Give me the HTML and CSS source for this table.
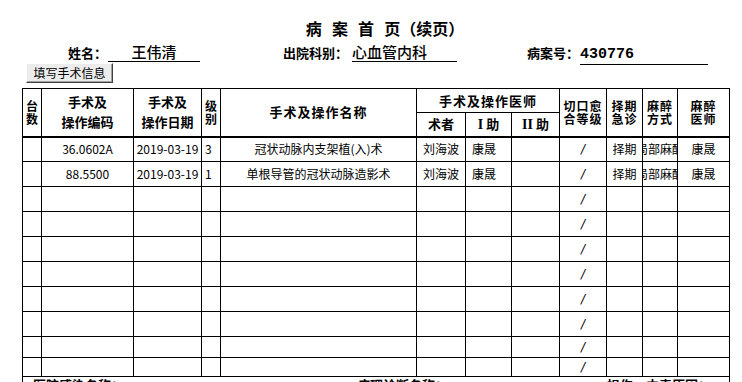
FILE: index.html
```html
<!DOCTYPE html>
<html lang="zh-CN">
<head>
<meta charset="utf-8">
<title>病案首页（续页）</title>
<link rel="stylesheet" href="styles.css">
</head>
<body>
<div class="page">
  <h1 class="title">病 案 首 页（续页）</h1>
  <div class="info">
    <span class="label label-name">姓名：</span>
    <span class="value value-name">王伟清</span>
    <span class="label label-dept">出院科别：</span>
    <span class="value value-dept">心血管内科</span>
    <span class="label label-no">病案号：</span>
    <span class="value value-no">430776</span>
  </div>
  <button class="btn" type="button">填写手术信息</button>
  <table class="ops">
    <colgroup>
      <col class="c1"><col class="c2"><col class="c3"><col class="c4"><col class="c5"><col class="c6">
      <col class="c7"><col class="c8"><col class="c9"><col class="c10"><col class="c11"><col class="c12">
    </colgroup>
    <thead>
      <tr class="hr1">
        <th rowspan="2" class="stack">台<br>数</th>
        <th rowspan="2" class="two">手术及<br>操作编码</th>
        <th rowspan="2" class="two">手术及<br>操作日期</th>
        <th rowspan="2" class="stack">级<br>别</th>
        <th rowspan="2" class="wide">手术及操作名称</th>
        <th colspan="3" class="wide">手术及操作医师</th>
        <th rowspan="2" class="stack up spaced">切口愈<br>合等级</th>
        <th rowspan="2" class="stack up spaced">择期<br>急诊</th>
        <th rowspan="2" class="stack up spaced">麻醉<br>方式</th>
        <th rowspan="2" class="stack spaced">麻醉<br>医师</th>
      </tr>
      <tr class="hr2">
        <th class="sub">术者</th>
        <th class="sub"><span class="roman">I</span> 助</th>
        <th class="sub"><span class="roman">II</span> 助</th>
      </tr>
    </thead>
    <tbody>
      <tr>
        <td></td><td class="num">36.0602A</td><td class="num">2019-03-19</td><td class="left num">3</td>
        <td>冠状动脉内支架植(入)术</td><td>刘海波</td><td class="left pad">康晟</td><td></td>
        <td class="slash">/</td><td>择期</td><td><div class="clip">局部麻醉</div></td><td>康晟</td>
      </tr>
      <tr>
        <td></td><td class="num">88.5500</td><td class="num">2019-03-19</td><td class="left num">1</td>
        <td>单根导管的冠状动脉造影术</td><td>刘海波</td><td class="left pad">康晟</td><td></td>
        <td class="slash">/</td><td>择期</td><td><div class="clip">局部麻醉</div></td><td>康晟</td>
      </tr>
      <tr><td></td><td></td><td></td><td></td><td></td><td></td><td></td><td></td><td class="slash">/</td><td></td><td></td><td></td></tr>
      <tr><td></td><td></td><td></td><td></td><td></td><td></td><td></td><td></td><td class="slash">/</td><td></td><td></td><td></td></tr>
      <tr><td></td><td></td><td></td><td></td><td></td><td></td><td></td><td></td><td class="slash">/</td><td></td><td></td><td></td></tr>
      <tr><td></td><td></td><td></td><td></td><td></td><td></td><td></td><td></td><td class="slash">/</td><td></td><td></td><td></td></tr>
      <tr><td></td><td></td><td></td><td></td><td></td><td></td><td></td><td></td><td class="slash">/</td><td></td><td></td><td></td></tr>
      <tr><td></td><td></td><td></td><td></td><td></td><td></td><td></td><td></td><td class="slash">/</td><td></td><td></td><td></td></tr>
      <tr class="short1"><td></td><td></td><td></td><td></td><td></td><td></td><td></td><td></td><td class="slash">/</td><td></td><td></td><td></td></tr>
      <tr class="short2"><td></td><td></td><td></td><td></td><td></td><td></td><td></td><td></td><td class="slash">/</td><td></td><td></td><td></td></tr>
    </tbody>
  </table>
  <div class="next">
    <span class="next-a">医院感染名称：</span>
    <span class="next-b">病理诊断名称：</span>
    <span class="next-c">损伤、中毒原因：</span>
  </div>
</div>
</body>
</html>
```

FILE: styles.css
```css
html, body {
  margin: 0;
  padding: 0;
  overflow: hidden;
  background: #fff;
}

body {
  width: 742px;
  height: 382px;
  color: #000;
  font-family: "Noto Sans CJK SC", "Noto Sans", sans-serif;
}

.page {
  padding-top: 18px;
}

.title {
  margin: 0;
  padding-left: 28px;
  font-size: 16px;
  font-weight: 700;
  line-height: 20px;
  text-align: center;
  word-spacing: 6.5px;
}

.info {
  display: flex;
  align-items: baseline;
  height: 20px;
  margin-top: 4px;
}

.label {
  font-size: 13px;
  font-weight: 700;
  line-height: 19px;
  white-space: nowrap;
}

.label-name { margin-left: 68px; width: 40px; }
.label-dept { margin-left: 83px; width: 69px; }
.label-no { margin-left: 70px; width: 53px; }

.value {
  font-size: 15px;
  font-weight: 500;
  line-height: 19px;
  border-bottom: 1px solid #000;
  white-space: nowrap;
}

.value-name { width: 92px; text-align: center; }
.value-dept { width: 105px; }
.value-no {
  width: 128px;
  font-family: "Liberation Mono", monospace;
  font-weight: 700;
}

.btn {
  display: block;
  width: 87px;
  height: 20px;
  margin: 1px 0 0 26px;
  padding: 0;
  font-family: "Noto Sans CJK SC", sans-serif;
  font-size: 12px;
  line-height: 16px;
  color: #000;
  background: #ececec;
  border-top: 1px solid #fff;
  border-left: 1px solid #fff;
  border-right: 1px solid #404040;
  border-bottom: 1px solid #404040;
  box-shadow: inset -1px -1px 0 #a0a0a0;
}

.ops {
  width: 707px;
  margin: 5px 0 0 22px;
  border-collapse: collapse;
  table-layout: fixed;
}

.c1 { width: 19px; }
.c2 { width: 92px; }
.c3 { width: 68px; }
.c4 { width: 19px; }
.c5 { width: 196px; }
.c6 { width: 49px; }
.c7 { width: 46px; }
.c8 { width: 48px; }
.c9 { width: 47px; }
.c10 { width: 36px; }
.c11 { width: 35px; }
.c12 { width: 52px; }

.ops th,
.ops td {
  border: 1px solid #000;
  padding: 0;
  text-align: center;
  vertical-align: middle;
  overflow: hidden;
}

.ops th {
  font-size: 13px;
  font-weight: 700;
  white-space: nowrap;
}

.hr1 { height: 24px; }
.hr2 { height: 24px; }

.ops thead tr.hr2 th,
.ops thead th[rowspan] {
  border-bottom: 2px solid #000;
}

.two { line-height: 20px; }
.ops th.stack { font-size: 12px; line-height: 13px; }
.up { padding-bottom: 6px; }
.spaced { letter-spacing: 1px; }
.wide { letter-spacing: 1px; line-height: 16px; }
.sub { line-height: 16px; }

.roman {
  font-family: "Liberation Serif", serif;
  font-weight: 700;
  font-size: 14px;
}

.ops tbody tr { height: 25px; }
.ops tbody tr.short1 { height: 21px; }
.ops tbody tr.short2 { height: 19px; }

.ops td {
  font-size: 12px;
  line-height: 14px;
  white-space: nowrap;
}

.ops td.left { text-align: left; padding-left: 3px; }
.ops td.pad { padding-left: 6px; }

.slash {
  font-family: "DejaVu Sans", sans-serif;
  font-style: italic;
}

.clip {
  display: flex;
  justify-content: center;
  overflow: hidden;
  white-space: nowrap;
}

.next {
  display: flex;
  box-sizing: border-box;
  width: 708px;
  height: 20px;
  margin-left: 22px;
  border-left: 1px solid #000;
  border-right: 1px solid #000;
  font-size: 13px;
  font-weight: 700;
  line-height: 16px;
  white-space: nowrap;
}

.next-a { margin-left: 10px; width: 324px; }
.next-b { width: 250px; }
.next-c { flex: 1; }
```
